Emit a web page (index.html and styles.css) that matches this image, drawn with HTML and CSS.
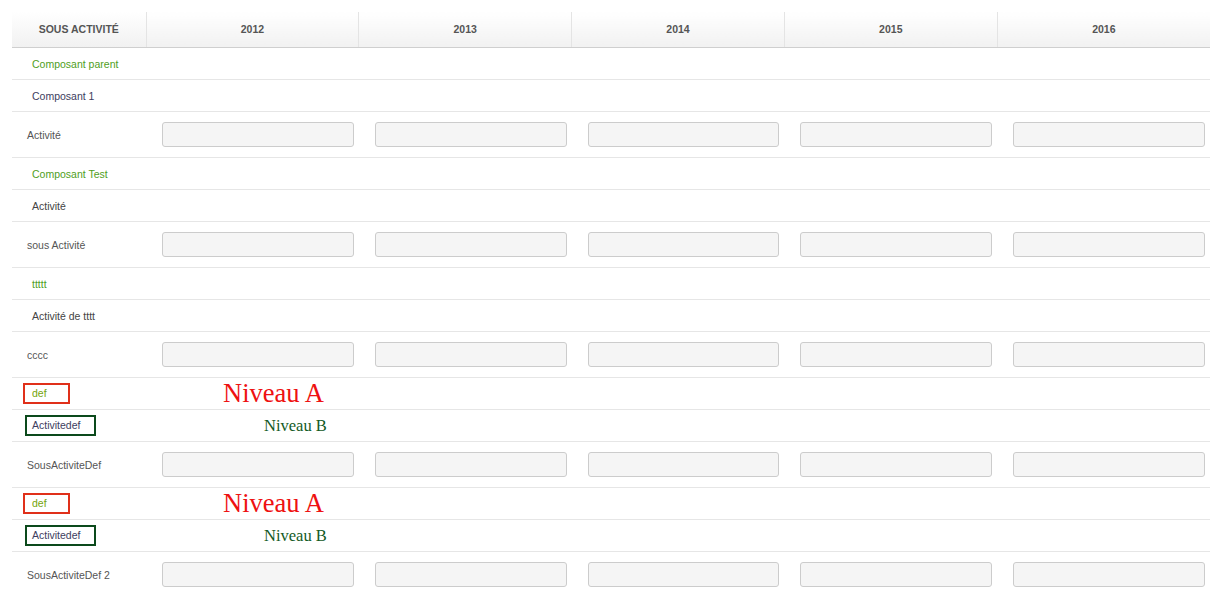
FILE: index.html
```html
<!DOCTYPE html>
<html lang="fr">
<head>
    <meta charset="UTF-8">
    <title>Sous activités</title>
    <link rel="stylesheet" href="styles.css">
</head>
<body>
    <table class="grid">
        <colgroup>
            <col class="col-label">
            <col><col><col><col><col>
        </colgroup>
        <thead>
            <tr>
                <th>SOUS ACTIVITÉ</th>
                <th>2012</th>
                <th>2013</th>
                <th>2014</th>
                <th>2015</th>
                <th>2016</th>
            </tr>
        </thead>
        <tbody id="grid-body">
            <!-- rows are built below -->
        </tbody>
    </table>

    <script>
        const rows = [
            { type: 'parent', label: 'Composant parent' },
            { type: 'child', label: 'Composant 1' },
            { type: 'input', label: 'Activité' },
            { type: 'parent', label: 'Composant Test' },
            { type: 'plain', label: 'Activité' },
            { type: 'input', label: 'sous Activité' },
            { type: 'parent', label: 'ttttt' },
            { type: 'plain', label: 'Activité de tttt' },
            { type: 'input', label: 'cccc' },
            { type: 'level-a', label: 'def' },
            { type: 'level-b', label: 'Activitedef' },
            { type: 'input', label: 'SousActiviteDef' },
            { type: 'level-a', label: 'def' },
            { type: 'level-b', label: 'Activitedef' },
            { type: 'input', label: 'SousActiviteDef 2' }
        ];

        const body = document.getElementById('grid-body');

        rows.forEach(row => {
            let html = '';
            if (row.type === 'input') {
                html = `<tr class="row-input"><td class="label">${row.label}</td>`;
                for (let i = 0; i < 5; i++) {
                    html += '<td class="cell"><input type="text"></td>';
                }
                html += '</tr>';
            } else if (row.type === 'level-a') {
                html = `<tr class="row-group"><td class="label boxed"><span class="box box-a">${row.label}</span></td>
                    <td class="note note-a">Niveau A</td><td colspan="4"></td></tr>`;
            } else if (row.type === 'level-b') {
                html = `<tr class="row-group"><td class="label boxed"><span class="box box-b">${row.label}</span></td>
                    <td class="note note-b">Niveau B</td><td colspan="4"></td></tr>`;
            } else {
                html = `<tr class="row-group"><td class="label ${row.type}">${row.label}</td><td colspan="5"></td></tr>`;
            }
            body.insertAdjacentHTML('beforeend', html);
        });
    </script>
</body>
</html>
```

FILE: styles.css
```css
body {
    font-family: 'Liberation Sans', Arial, sans-serif;
    background-color: #ffffff;
    color: #555555;
    margin: 0;
    padding: 12px 14px 0 12px;
}

.grid {
    width: 1198px;
    border-collapse: collapse;
    table-layout: fixed;
    font-size: 10.5px;
}

.col-label {
    width: 134px;
}

.grid th {
    height: 33px;
    padding: 0 0 2px;
    font-size: 10.5px;
    font-weight: bold;
    color: #555555;
    text-align: center;
    background: linear-gradient(to bottom, #ffffff, #f1f1f1);
    border-left: 1px solid #e4e4e4;
    border-bottom: 1px solid #cfcfcf;
}

.grid th:first-child {
    border-left: none;
}

.grid td {
    padding: 0;
    border-bottom: 1px solid #e6e6e6;
    vertical-align: middle;
}

.row-group td {
    height: 31px;
}

.row-input td {
    height: 45px;
}

.label {
    padding-left: 20px !important;
    white-space: nowrap;
}

.row-input .label {
    padding-left: 15px !important;
    color: #555555;
}

.parent {
    color: #4f9e1c;
}

.child {
    color: #3d3d5e;
}

.plain {
    color: #444444;
}

.cell {
    padding: 0 5px 0 16px !important;
}

.cell input {
    display: block;
    box-sizing: border-box;
    width: 100%;
    height: 25px;
    margin: 0;
    border: 1px solid #cccccc;
    border-radius: 3px;
    background-color: #f5f5f5;
}

.boxed {
    padding-left: 11px !important;
}

.box {
    display: inline-block;
    box-sizing: border-box;
    height: 21px;
    line-height: 17px;
    vertical-align: middle;
}

.box-a {
    width: 47px;
    padding-left: 7px;
    border: 2px solid #e0301a;
    color: #74a40c;
}

.box-b {
    width: 71px;
    margin-left: 2px;
    padding-left: 5px;
    border: 2px solid #0c4a1c;
    color: #3d3d5e;
}

.note {
    font-family: 'Liberation Serif', 'Times New Roman', serif;
    white-space: nowrap;
}

.note-a {
    padding-left: 77px !important;
    font-size: 26.5px;
    color: #ee1111;
}

.note-b {
    padding-right: 32px !important;
    text-align: right;
    font-size: 16.5px;
    color: #135a25;
}
```
